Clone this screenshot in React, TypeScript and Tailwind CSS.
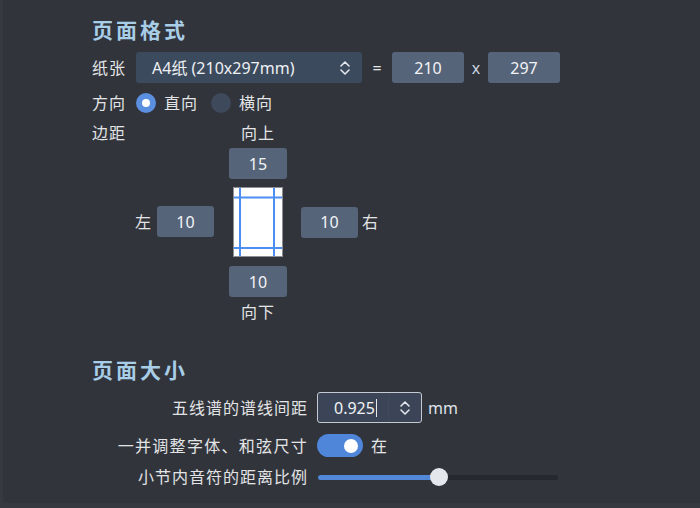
import React from "react";

const Chevrons = ({ className = "" }: { className?: string }) => (
  <svg width="12" height="18" viewBox="0 0 12 18" className={className} fill="none" stroke="#e4e7ec" strokeWidth="1.6" strokeLinecap="round" strokeLinejoin="round">
    <path d="M2 7 L6 3 L10 7" />
    <path d="M2 11 L6 15 L10 11" />
  </svg>
);

const NumBox = ({ v, w = "w-[58px]" }: { v: string; w?: string }) => (
  <div className={`${w} h-[31px] rounded-[3px] bg-[#566479] flex items-center justify-center text-[16px] text-[#f2f3f5]`}>{v}</div>
);

export default function App() {
  return (
    <div className="w-[700px] h-[508px] bg-[#31343b] overflow-hidden font-['Noto_Sans','Noto_Sans_CJK_SC',sans-serif] text-[16px] text-[#e3e4e6] flex flex-col pl-[92px] relative">
      <div className="absolute left-0 top-0 bottom-0 w-[3px] bg-[#363940]" />
      <div className="absolute left-0 right-0 bottom-0 h-[5px] bg-[#363940]" />
      {/* Section 1 */}
      <div className="mt-[13px] h-[32px] leading-[32px] text-[21px] font-bold tracking-[3px] text-[#a8cde6] font-['Noto_Sans_CJK_SC',sans-serif]">页面格式</div>
      <div className="mt-[7px] h-[31px] flex items-center">
        <span className="w-[44px] leading-[20px] tracking-[1px]">纸张</span>
        <div className="w-[226px] h-[31px] rounded-[3px] bg-[#3c4a5d] flex items-center pl-[16px] pr-[11px] justify-between text-[#eef0f3]">
          <span>A4纸 (210x297mm)</span>
          <Chevrons />
        </div>
        <span className="w-[30px] text-center">=</span>
        <NumBox v="210" w="w-[72px]" />
        <span className="w-[24px] text-center text-[#c9d3e0]">x</span>
        <NumBox v="297" w="w-[72px]" />
      </div>
      <div className="mt-[10px] h-[20px] flex items-center">
        <span className="w-[44px] leading-[20px] tracking-[1px]">方向</span>
        <div className="w-[20px] h-[20px] rounded-full bg-[#5b8fdf] flex items-center justify-center">
          <div className="w-[8px] h-[8px] rounded-full bg-white" />
        </div>
        <span className="ml-[8px] w-[47px] leading-[20px] tracking-[1px]">直向</span>
        <div className="w-[20px] h-[20px] rounded-full bg-[#3e495b]" />
        <span className="ml-[8px] leading-[20px] tracking-[1px]">横向</span>
      </div>
      {/* margins */}
      <div className="mt-[10px] grid grid-cols-[122px_58px_80px] gap-x-[15px] items-center">
        <div className="h-[20px] leading-[20px] tracking-[1px]">边距</div>
        <div className="h-[20px] leading-[20px] text-center tracking-[1px]">向上</div>
        <div />
        <div />
        <div className="mt-[5px]"><NumBox v="15" /></div>
        <div />
        <div className="flex items-center justify-end mt-[7px]">
          <span className="mr-[6px] leading-[20px]">左</span>
          <NumBox v="10" w="w-[57px]" />
        </div>
        <div className="flex justify-center mt-[8px]">
          <svg width="50" height="70" viewBox="0 0 50 70">
            <rect x="0.5" y="0.5" width="49" height="69" fill="#ffffff" stroke="#8c8f95" strokeWidth="1" />
            <line x1="7" y1="1" x2="7" y2="69" stroke="#4c8ef2" strokeWidth="2" />
            <line x1="41" y1="1" x2="41" y2="69" stroke="#4c8ef2" strokeWidth="2" />
            <line x1="1" y1="10.5" x2="49" y2="10.5" stroke="#4c8ef2" strokeWidth="2" />
            <line x1="1" y1="61" x2="49" y2="61" stroke="#4c8ef2" strokeWidth="2" />
          </svg>
        </div>
        <div className="flex items-center mt-[8px] -ml-[1px]">
          <NumBox v="10" w="w-[57px]" />
          <span className="ml-[4px] leading-[20px]">右</span>
        </div>
        <div />
        <div className="mt-[9px]"><NumBox v="10" /></div>
        <div />
        <div />
        <div className="mt-[5px] h-[20px] leading-[20px] text-center tracking-[1px]">向下</div>
        <div />
      </div>
      {/* Section 2 */}
      <div className="mt-[31px] h-[32px] leading-[32px] text-[21px] font-bold tracking-[3px] text-[#a8cde6] font-['Noto_Sans_CJK_SC',sans-serif]">页面大小</div>
      <div className="mt-[7px] flex items-center h-[31px] -ml-[92px]">
        <span className="w-[308px] text-right leading-[20px] tracking-[1px]">五线谱的谱线间距</span>
        <div className="ml-[9px] w-[105px] h-[31px] rounded-[3px] border-[1.5px] border-[#c5c9d0] bg-[#3b4557] flex items-center">
          <div className="w-[70px] h-full flex items-center pl-[16px] text-[#f2f3f5]">
            <span>0.925</span>
            <span className="ml-[1px] w-[1px] h-[18px] bg-[#e8e8e8]" />
          </div>
          <div className="flex-1 h-full border-l border-[#404a5b] flex items-center justify-center">
            <Chevrons />
          </div>
        </div>
        <span className="ml-[6px] text-[#dfe3ea]">mm</span>
      </div>
      <div className="mt-[11px] flex items-center h-[23px] -ml-[92px]">
        <span className="w-[308px] text-right leading-[20px] tracking-[1.3px]">一并调整字体、和弦尺寸</span>
        <div className="ml-[9px] w-[46px] h-[23px] rounded-full bg-[#4f86d9] flex items-center justify-end pr-[5px]">
          <div className="w-[14px] h-[14px] rounded-full bg-white" />
        </div>
        <span className="ml-[8px] leading-[20px]">在</span>
      </div>
      <div className="mt-[8px] flex items-center h-[24px] -ml-[92px]">
        <span className="w-[308px] text-right leading-[20px] tracking-[1px]">小节内音符的距离比例</span>
        <div className="ml-[10px] w-[240px] h-[18px] relative flex items-center">
          <div className="w-full h-[5px] rounded-full bg-[#25282e] flex">
            <div className="w-[122px] h-full rounded-full bg-[#5288d8]" />
          </div>
          <div className="absolute left-[112px] top-0 w-[18px] h-[18px] rounded-full bg-[#e4e7eb]" />
        </div>
      </div>
    </div>
  );
}
